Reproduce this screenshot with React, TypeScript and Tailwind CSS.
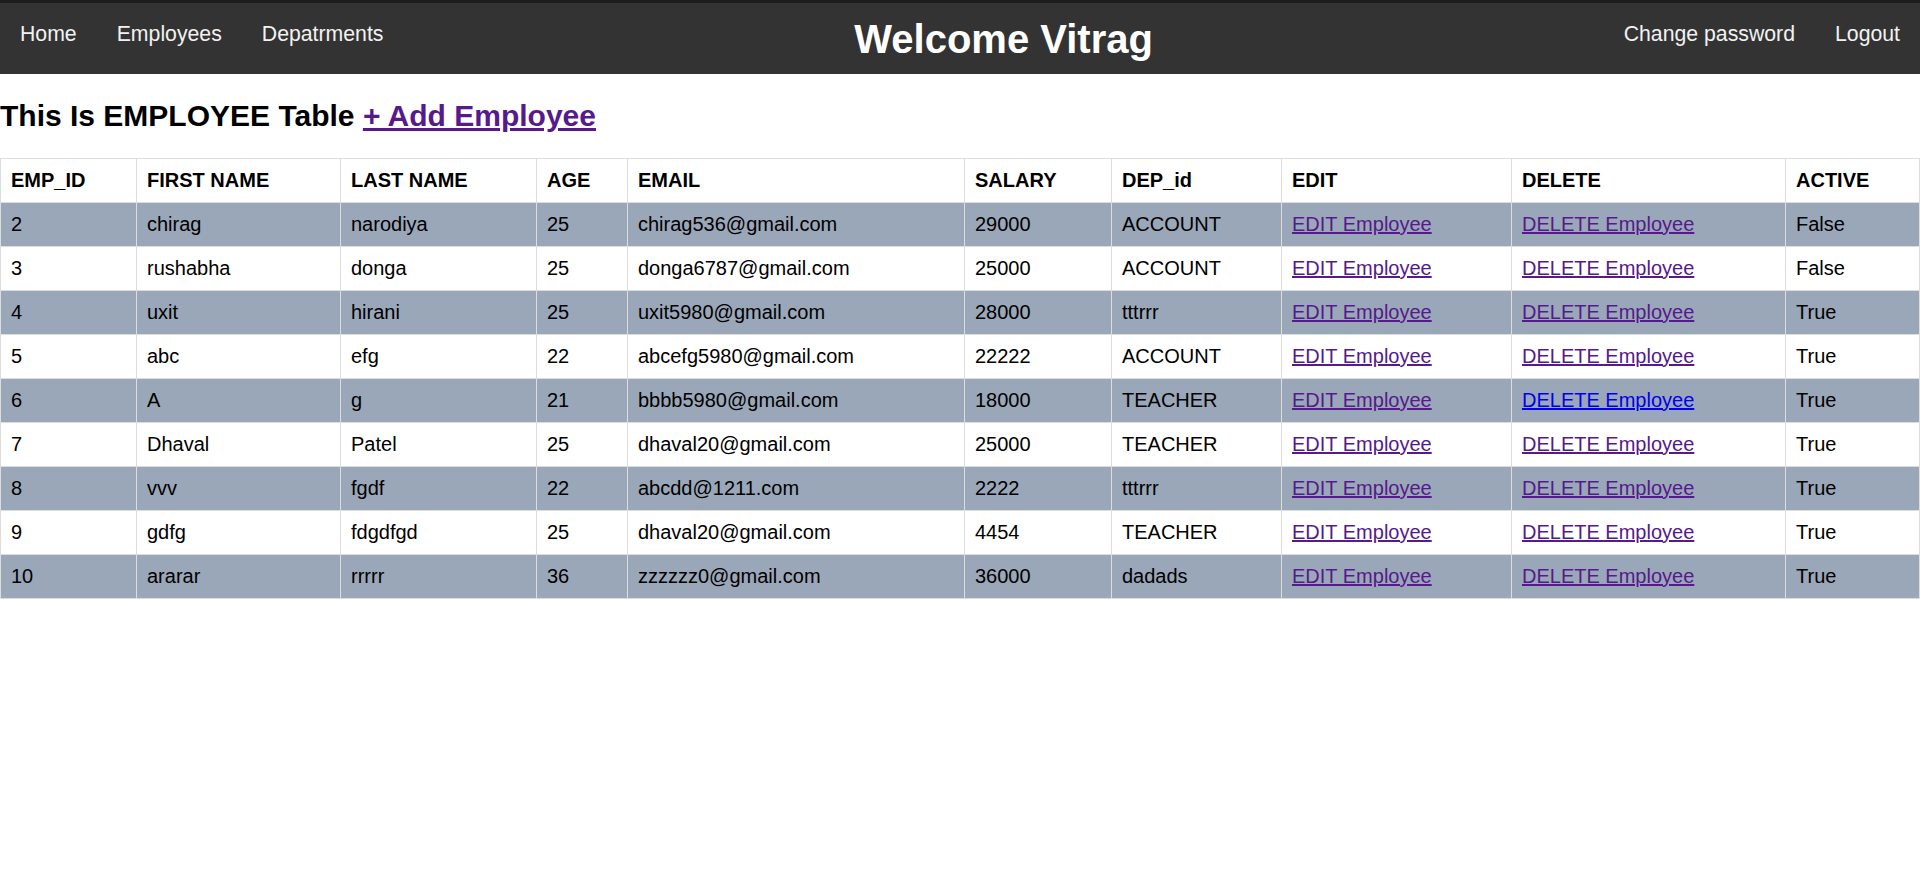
import React from "react";

type Row = {
  id: string;
  first: string;
  last: string;
  age: string;
  email: string;
  salary: string;
  dep: string;
  active: string;
  delBlue?: boolean;
};

const rows: Row[] = [
  { id: "2", first: "chirag", last: "narodiya", age: "25", email: "chirag536@gmail.com", salary: "29000", dep: "ACCOUNT", active: "False" },
  { id: "3", first: "rushabha", last: "donga", age: "25", email: "donga6787@gmail.com", salary: "25000", dep: "ACCOUNT", active: "False" },
  { id: "4", first: "uxit", last: "hirani", age: "25", email: "uxit5980@gmail.com", salary: "28000", dep: "tttrrr", active: "True" },
  { id: "5", first: "abc", last: "efg", age: "22", email: "abcefg5980@gmail.com", salary: "22222", dep: "ACCOUNT", active: "True" },
  { id: "6", first: "A", last: "g", age: "21", email: "bbbb5980@gmail.com", salary: "18000", dep: "TEACHER", active: "True", delBlue: true },
  { id: "7", first: "Dhaval", last: "Patel", age: "25", email: "dhaval20@gmail.com", salary: "25000", dep: "TEACHER", active: "True" },
  { id: "8", first: "vvv", last: "fgdf", age: "22", email: "abcdd@1211.com", salary: "2222", dep: "tttrrr", active: "True" },
  { id: "9", first: "gdfg", last: "fdgdfgd", age: "25", email: "dhaval20@gmail.com", salary: "4454", dep: "TEACHER", active: "True" },
  { id: "10", first: "ararar", last: "rrrrr", age: "36", email: "zzzzzz0@gmail.com", salary: "36000", dep: "dadads", active: "True" },
];

const headers = ["EMP_ID", "FIRST NAME", "LAST NAME", "AGE", "EMAIL", "SALARY", "DEP_id", "EDIT", "DELETE", "ACTIVE"];
const widths = [136, 204, 196, 91, 337, 147, 170, 230, 274, 134];

const cell = "border border-[#dddddd] px-[10px] py-[10px] text-left align-middle leading-[23px] whitespace-nowrap";
const navLink = "px-5 pt-[19px] text-[21.25px] leading-[24px] text-[#f2f2f2] no-underline";

export default function App() {
  return (
    <div className="min-h-[877px] bg-white text-black" style={{ fontFamily: '"Liberation Sans", Arial, sans-serif' }}>
      <nav className="flex h-[74px] border-t-[3px] border-[#1c1c1c] bg-[#333333]">
        <div className="flex items-start">
          <a href="#" className={navLink}>Home</a>
          <a href="#" className={navLink}>Employees</a>
          <a href="#" className={navLink}>Depatrments</a>
        </div>
        <div className="flex flex-1 items-center justify-center">
          <h1 className="mt-[1px] text-[40px] font-bold leading-[46px] text-white">Welcome Vitrag</h1>
        </div>
        <div className="flex items-start">
          <a href="#" className={navLink}>Change password</a>
          <a href="#" className={navLink}>Logout</a>
        </div>
      </nav>

      <h2 className="my-[25px] text-[30px] font-bold leading-[34px]">
        This Is EMPLOYEE Table{" "}
        <a href="#" className="text-[#551A8B] underline">+ Add Employee</a>
      </h2>

      <table className="w-[1919px] table-fixed border-collapse text-[20px]">
        <colgroup>
          {widths.map((w, i) => (
            <col key={i} style={{ width: w }} />
          ))}
        </colgroup>
        <thead>
          <tr className="bg-white">
            {headers.map((h) => (
              <th key={h} className={cell + " font-bold"}>{h}</th>
            ))}
          </tr>
        </thead>
        <tbody>
          {rows.map((r, i) => (
            <tr key={r.id} className={i % 2 === 0 ? "bg-[#9aa7b9]" : "bg-white"}>
              <td className={cell}>{r.id}</td>
              <td className={cell}>{r.first}</td>
              <td className={cell}>{r.last}</td>
              <td className={cell}>{r.age}</td>
              <td className={cell}>{r.email}</td>
              <td className={cell}>{r.salary}</td>
              <td className={cell}>{r.dep}</td>
              <td className={cell}>
                <a href="#" className="text-[#551A8B] underline">EDIT Employee</a>
              </td>
              <td className={cell}>
                <a href="#" className={r.delBlue ? "text-[#0000EE] underline" : "text-[#551A8B] underline"}>DELETE Employee</a>
              </td>
              <td className={cell}>{r.active}</td>
            </tr>
          ))}
        </tbody>
      </table>
    </div>
  );
}
